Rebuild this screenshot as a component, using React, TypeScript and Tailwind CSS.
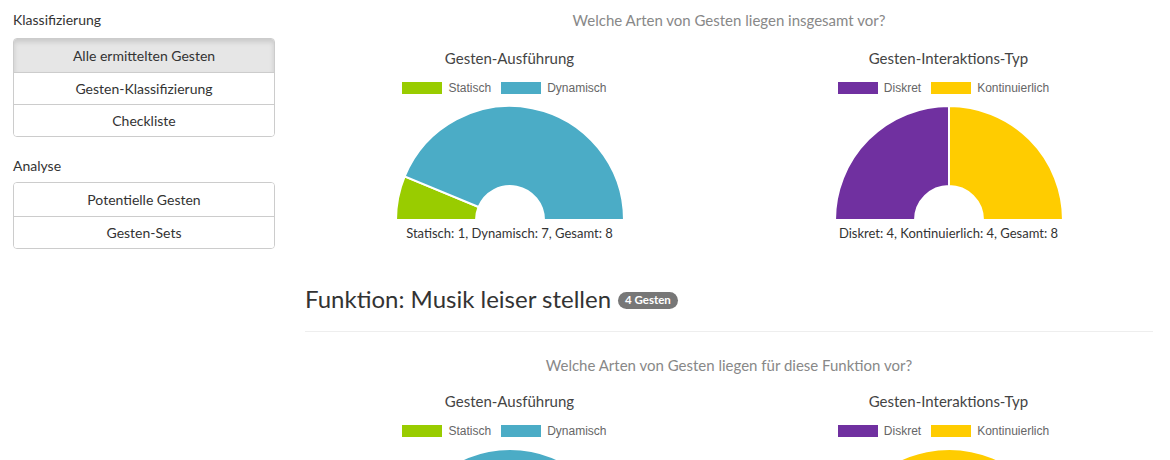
type Slice = { label: string; value: number; color: string };

const R = 114;
const RI = 34;

function pt(r: number, deg: number) {
  const a = (deg * Math.PI) / 180;
  return [R + r * Math.cos(a), R - r * Math.sin(a)];
}

function arcPath(from: number, to: number) {
  const [x1, y1] = pt(R, from);
  const [x2, y2] = pt(R, to);
  const [x3, y3] = pt(RI, to);
  const [x4, y4] = pt(RI, from);
  return `M${x1} ${y1} A${R} ${R} 0 0 1 ${x2} ${y2} L${x3} ${y3} A${RI} ${RI} 0 0 0 ${x4} ${y4} Z`;
}

function HalfDonut({ slices }: { slices: Slice[] }) {
  const total = slices.reduce((s, x) => s + x.value, 0);
  let angle = 180;
  return (
    <svg width={R * 2} height={R} viewBox={`0 0 ${R * 2} ${R}`} className="block">
      {slices.map((s) => {
        const from = angle;
        angle = angle - (s.value / total) * 180;
        if (s.value === 0) return null;
        return <path key={s.label} d={arcPath(from, angle)} fill={s.color} stroke="#fff" strokeWidth={2} />;
      })}
    </svg>
  );
}

function ChartBlock({ title, slices }: { title: string; slices: Slice[] }) {
  const total = slices.reduce((s, x) => s + x.value, 0);
  return (
    <div className="flex flex-col items-center px-[15px]">
      <div className="text-[15px] leading-[20px] text-[#444]">{title}</div>
      <div className="mt-[14px] pr-[10px] flex items-center h-[12px] gap-[10px] font-['Liberation_Sans',Arial,sans-serif] text-[12px] text-[#666]">
        {slices.map((s) => (
          <div key={s.label} className="flex items-center gap-[6px]">
            <span className="block w-[40px] h-[12px]" style={{ background: s.color }} />
            <span>{s.label}</span>
          </div>
        ))}
      </div>
      <div className="mt-[12px] h-[114px]">
        <HalfDonut slices={slices} />
      </div>
      <div className="mt-[4px] text-[13px] leading-[18px] text-[#333]">
        {slices.map((s) => `${s.label}: ${s.value}, `).join('')}Gesamt: {total}
      </div>
    </div>
  );
}

const GREEN = '#99cc00';
const BLUE = '#4bacc6';
const PURPLE = '#7030a0';
const YELLOW = '#ffcc00';

function ChartRow({
  question,
  exec,
  inter,
  compact
}: {
  question: string;
  exec: number[];
  inter: number[];
  compact?: boolean;
}) {
  return (
    <div>
      <div className="text-center text-[15px] leading-[20px] text-[#888]">{question}</div>
      <div className={`grid grid-cols-2 ${compact ? 'mt-[16px]' : 'mt-[18px]'}`}>
        <ChartBlock
          title="Gesten-Ausführung"
          slices={[
            { label: 'Statisch', value: exec[0], color: GREEN },
            { label: 'Dynamisch', value: exec[1], color: BLUE }
          ]}
        />
        <ChartBlock
          title="Gesten-Interaktions-Typ"
          slices={[
            { label: 'Diskret', value: inter[0], color: PURPLE },
            { label: 'Kontinuierlich', value: inter[1], color: YELLOW }
          ]}
        />
      </div>
    </div>
  );
}

function NavGroup({ items, active, className }: { items: string[]; active?: number; className: string }) {
  return (
    <div className={`${className} rounded-[4px] border border-[#ccc] overflow-hidden`}>
      {items.map((item, i) => (
        <div
          key={item}
          className={`${i === 0 ? 'h-[33px]' : 'h-[32px]'} flex items-center justify-center text-[14px] text-[#333] ${
            i > 0 ? 'border-t border-[#ccc]' : ''
          } ${i === active ? 'bg-[#e6e6e6] shadow-[inset_0_3px_5px_rgba(0,0,0,0.125)]' : 'bg-white'}`}
        >
          {item}
        </div>
      ))}
    </div>
  );
}

export default function App() {
  return (
    <div className="w-[1170px] bg-white font-['Lato',sans-serif] flex">
      <aside className="w-[262px] ml-[13px] pt-[10px] shrink-0">
        <div className="text-[14px] leading-[20px] text-[#333]">Klassifizierung</div>
        <NavGroup
          className="mt-[8px]"
          items={['Alle ermittelten Gesten', 'Gesten-Klassifizierung', 'Checkliste']}
          active={0}
        />
        <div className="mt-[19px] text-[14px] leading-[20px] text-[#333]">Analyse</div>
        <NavGroup className="mt-[6px]" items={['Potentielle Gesten', 'Gesten-Sets']} />
      </aside>

      <main className="w-[878px] ml-[15px] pt-[10px]">
        <ChartRow question="Welche Arten von Gesten liegen insgesamt vor?" exec={[1, 7]} inter={[4, 4]} />

        <div className="mx-[15px] mt-[44px] flex items-center gap-[7px]">
          <h2 className="text-[24px] leading-[26px] text-[#333]">Funktion: Musik leiser stellen</h2>
          <span className="mt-[2px] rounded-full bg-[#777] px-[7px] h-[17px] flex items-center text-[11.5px] font-bold text-white">
            4 Gesten
          </span>
        </div>
        <div className="mx-[15px] mt-[19px] border-t border-[#eee]" />

        <div className="mt-[23px]">
          <ChartRow
            question="Welche Arten von Gesten liegen für diese Funktion vor?"
            exec={[0, 4]}
            inter={[1, 3]}
            compact
          />
        </div>
      </main>
    </div>
  );
}
